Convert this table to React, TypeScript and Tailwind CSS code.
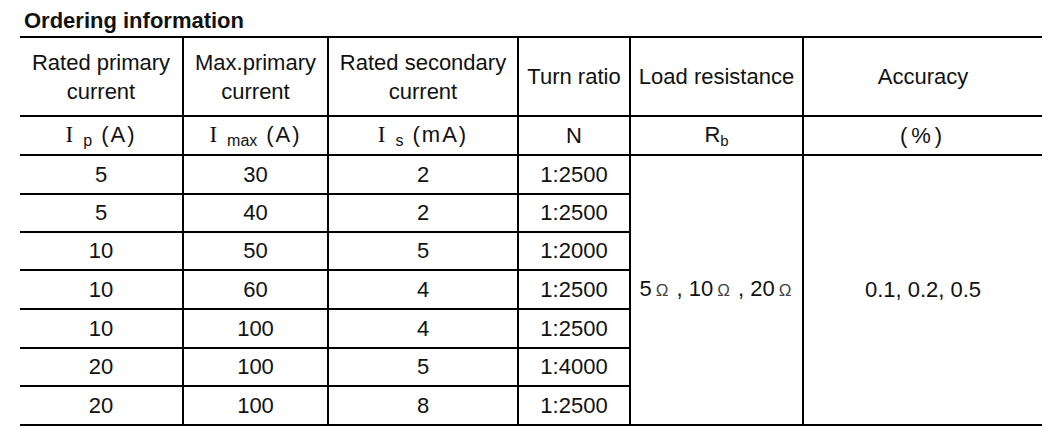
import React from "react";

const rows = [
  { ip: "5", imax: "30", is: "2", n: "1:2500", h: "h-[39px]" },
  { ip: "5", imax: "40", is: "2", n: "1:2500", h: "h-[38px]" },
  { ip: "10", imax: "50", is: "5", n: "1:2000", h: "h-[38px]" },
  { ip: "10", imax: "60", is: "4", n: "1:2500", h: "h-[39px]" },
  { ip: "10", imax: "100", is: "4", n: "1:2500", h: "h-[39px]" },
  { ip: "20", imax: "100", is: "5", n: "1:4000", h: "h-[38px]" },
  { ip: "20", imax: "100", is: "8", n: "1:2500", h: "h-[39px]" },
];

const cell = "border-b-2 border-black p-0 text-center align-middle";
const lcell = cell + " border-l-2";

// symbol like "I p (A)": serif I, small dropped subscript, spaced unit
function Sym({ sub, unit }: { sub: string; unit: string }) {
  return (
    <span className="whitespace-nowrap">
      <span className="font-[Liberation_Serif,serif] text-[23px]">I</span>
      <span className="text-[16px] relative top-[4px] ml-[10px] mr-[9px]">{sub}</span>
      <span className="tracking-[2px]">{unit}</span>
    </span>
  );
}

function Ohm() {
  return <span className="text-[17px] text-[#444] ml-[4px] mr-[2px]">Ω</span>;
}

export default function App() {
  return (
    <div className="w-[1060px] h-[431px] bg-white text-[#111] font-[Liberation_Sans,Arial,sans-serif] px-[20px] pt-[9px]">
      <div className="ml-[4px] text-[22px] font-bold leading-[24px]">Ordering information</div>
      <table className="mt-[3px] w-[1022px] table-fixed border-collapse text-[22px]">
        <colgroup>
          <col className="w-[163px]" />
          <col className="w-[145px]" />
          <col className="w-[190px]" />
          <col className="w-[112px]" />
          <col className="w-[173px]" />
          <col className="w-[239px]" />
        </colgroup>
        <thead>
          <tr className="h-[79px] leading-[29px]">
            <th className={cell + " border-t-2 font-normal"}>
              Rated primary
              <br />
              current
            </th>
            <th className={lcell + " border-t-2 font-normal"}>
              Max.primary
              <br />
              current
            </th>
            <th className={lcell + " border-t-2 font-normal"}>
              Rated secondary
              <br />
              current
            </th>
            <th className={lcell + " border-t-2 font-normal whitespace-nowrap"}>Turn ratio</th>
            <th className={lcell + " border-t-2 font-normal whitespace-nowrap"}>Load resistance</th>
            <th className={lcell + " border-t-2 font-normal"}>Accuracy</th>
          </tr>
          <tr className="h-[39px] leading-[26px]">
            <th className={cell + " font-normal"}>
              <Sym sub="p" unit="(A)" />
            </th>
            <th className={lcell + " font-normal"}>
              <Sym sub="max" unit="(A)" />
            </th>
            <th className={lcell + " font-normal"}>
              <Sym sub="s" unit="(mA)" />
            </th>
            <th className={lcell + " font-normal"}>N</th>
            <th className={lcell + " font-normal"}>
              R<span className="text-[15px] relative top-[4px]">b</span>
            </th>
            <th className={lcell + " font-normal tracking-[4px]"}>(%)</th>
          </tr>
        </thead>
        <tbody>
          {rows.map((r, i) => (
            <tr key={i} className={r.h + " leading-[26px]"}>
              <td className={cell}>{r.ip}</td>
              <td className={lcell}>{r.imax}</td>
              <td className={lcell}>{r.is}</td>
              <td className={lcell}>{r.n}</td>
              {i === 0 && (
                <>
                  <td rowSpan={7} className={lcell + " whitespace-nowrap"}>
                    5<Ohm /> , 10<Ohm /> , 20<Ohm />
                  </td>
                  <td rowSpan={7} className={lcell}>0.1, 0.2, 0.5</td>
                </>
              )}
            </tr>
          ))}
        </tbody>
      </table>
    </div>
  );
}
